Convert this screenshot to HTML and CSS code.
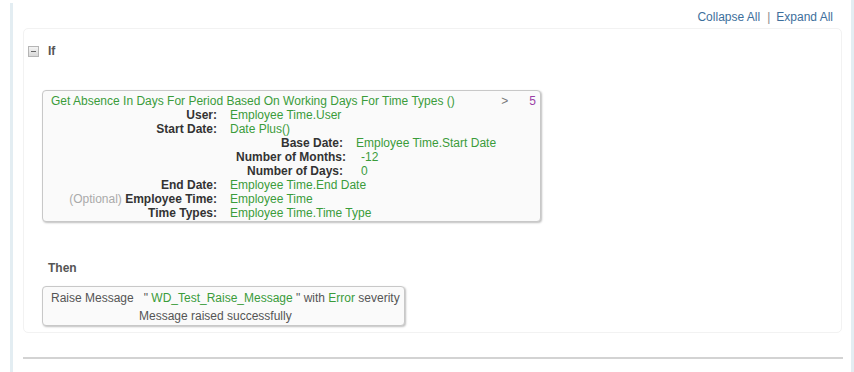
FILE: index.html
```html
<!DOCTYPE html>
<html lang="en">
<head>
    <meta charset="UTF-8">
    <meta name="viewport" content="width=device-width, initial-scale=1.0">
    <title>Rule Editor</title>
    <link rel="stylesheet" href="styles.css">
</head>
<body>
    <div class="rail rail-left"></div>
    <div class="main">
        <div class="toolbar">
            <a href="#" class="tool-link">Collapse All</a>
            <span class="tool-sep">|</span>
            <a href="#" class="tool-link">Expand All</a>
        </div>

        <div class="panel">
            <!-- If section -->
            <div class="section-head">
                <span class="toggle"><span class="toggle-minus"></span></span>
                <span class="section-title">If</span>
            </div>

            <div class="expr-box cond-box">
                <div class="expr-head">
                    <span class="green expr-title">Get Absence In Days For Period Based On Working Days For Time Types ()</span>
                    <span class="op">&gt;</span>
                    <span class="purple">5</span>
                </div>
                <div class="args">
                    <div class="arg-label">User:</div>
                    <div class="green">Employee Time.User</div>

                    <div class="arg-label">Start Date:</div>
                    <div class="green">Date Plus()</div>

                    <div class="nested">
                        <div class="arg-label">Base Date:</div>
                        <div class="green">Employee Time.Start Date</div>
                        <div class="arg-label shift">Number of Months:</div>
                        <div class="green inset">-12</div>
                        <div class="arg-label">Number of Days:</div>
                        <div class="green inset">0</div>
                    </div>

                    <div class="arg-label">End Date:</div>
                    <div class="green">Employee Time.End Date</div>

                    <div class="arg-label"><span class="optional">(Optional)</span> Employee Time:</div>
                    <div class="green">Employee Time</div>

                    <div class="arg-label">Time Types:</div>
                    <div class="green">Employee Time.Time Type</div>
                </div>
            </div>

            <!-- Then section -->
            <div class="section-head then-head">
                <span class="section-title">Then</span>
            </div>

            <div class="expr-box action-box">
                <div class="action-line">Raise Message &nbsp; " <span class="green">WD_Test_Raise_Message</span> " with <span class="green">Error</span> severity</div>
                <div class="action-note">Message raised successfully</div>
            </div>
        </div>

        <div class="divider"></div>
    </div>
    <div class="rail rail-right"></div>
</body>
</html>
```

FILE: styles.css
```css
body {
    margin: 0;
    font-family: 'Liberation Sans', Arial, sans-serif;
    font-size: 12px;
    color: #333;
    background-color: #fff;
    display: flex;
    height: 372px;
    overflow: hidden;
}

.rail {
    width: 3px;
    background-color: #e3edf2;
}

.rail-left {
    margin-left: 10px;
    margin-top: 3px;
}

.main {
    flex: 1;
    padding: 0 9px 0 10px;
}

.toolbar {
    height: 28px;
    box-sizing: border-box;
    padding: 10px 9px 0 0;
    display: flex;
    justify-content: flex-end;
    line-height: 14px;
}

.tool-link {
    color: #3d6f9c;
    text-decoration: none;
}

.tool-sep {
    color: #888;
    margin: 0 6px 0 7px;
}

.panel {
    height: 305px;
    box-sizing: border-box;
    border: 1px solid #f2f2f2;
    border-radius: 5px;
    padding: 15px 0 0 4px;
}

.section-head {
    display: flex;
    align-items: center;
    height: 14px;
}

.toggle {
    width: 9px;
    height: 9px;
    border: 1px solid #b5b5b5;
    background: linear-gradient(#f4f4f4, #d8d8d8);
    display: flex;
    align-items: center;
    justify-content: center;
    margin-right: 9px;
}

.toggle-minus {
    width: 5px;
    height: 1px;
    background-color: #666;
}

.section-title {
    font-weight: bold;
    color: #555;
}

.then-head {
    margin: 39px 0 0 20px;
}

.expr-box {
    background-color: #fafafa;
    border: 1px solid #c8c8c8;
    border-radius: 4px;
    box-shadow: 1px 1px 2px rgba(0, 0, 0, 0.25);
    line-height: 14px;
}

.cond-box {
    width: 499px;
    box-sizing: border-box;
    margin: 32px 0 0 14px;
    padding: 3px 4px 1px 0;
}

.expr-head {
    display: flex;
    padding-left: 8px;
}

.expr-title {
    flex: 1;
}

.op {
    color: #777;
    width: 28px;
}

.green {
    color: #3a9c3a;
}

.purple {
    color: #9b3fa6;
}

.args {
    display: grid;
    grid-template-columns: 174px 1fr;
    column-gap: 13px;
}

.arg-label {
    text-align: right;
    font-weight: bold;
    color: #333;
}

.optional {
    font-weight: normal;
    color: #aaa;
}

.nested {
    grid-column: 1 / 3;
    display: grid;
    grid-template-columns: 300px 1fr;
    column-gap: 13px;
}

.shift {
    margin-right: -3px;
}

.inset {
    padding-left: 5px;
}

.action-box {
    display: inline-block;
    margin: 11px 0 0 14px;
    padding: 2px 4px 0 8px;
    line-height: 18px;
    color: #555;
}

.action-note {
    text-align: center;
    padding-right: 20px;
}

.divider {
    margin-top: 24px;
    height: 2px;
    background-color: #d3d3d3;
    margin-right: -1px;
}
```
